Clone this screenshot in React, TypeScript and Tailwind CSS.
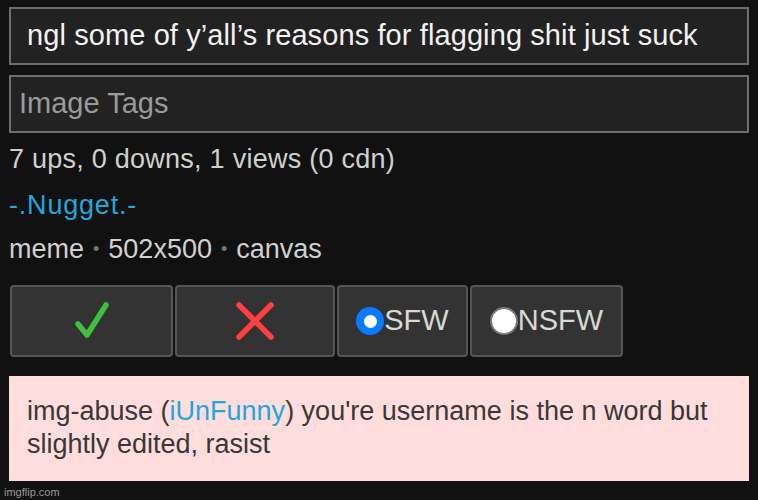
export default function App() {
    return (
        <div className="w-[758px] h-[500px] bg-[#111111] overflow-hidden flex flex-col font-['Liberation_Sans',Arial,sans-serif]">
            <div className="px-[9px] pt-[7px] flex flex-col gap-[10px]">
                <div className="h-[58px] border-2 border-[#6f6f6f] bg-[#222222] flex items-center pl-[16px]">
                    <span className="text-[29px] text-[#f2f2f2] whitespace-nowrap tracking-[0.1px]">ngl some of y’all’s reasons for flagging shit just suck</span>
                </div>
                <div className="h-[58px] border-2 border-[#6f6f6f] bg-[#222222] flex items-center pl-[8px]">
                    <span className="text-[29px] text-[#9a9a9a]">Image Tags</span>
                </div>
            </div>
            <div className="px-[9px] mt-[3px] flex flex-col text-[27px] text-[#d0d0d0]">
                <div className="h-[46px] flex items-center tracking-[0.25px]">7 ups, 0 downs, 1 views (0 cdn)</div>
                <div className="h-[46px] flex items-center text-[#1fa8dc] text-[27px] tracking-[0.8px]">-.Nugget.-</div>
                <div className="h-[42px] flex items-center">
                    meme<span className="text-[#777] mx-[9px] text-[18px]">•</span>502x500<span className="text-[#777] mx-[9px] text-[18px]">•</span>canvas
                </div>
            </div>
            <div className="flex gap-[2px] px-[10px] mt-[15px]">
                <button className="w-[163px] h-[72px] rounded-[4px] border-2 border-[#555] bg-[#333333] flex items-center justify-center">
                    <svg width="44" height="48" viewBox="0 0 44 48">
                        <path d="M8 27 L17 38 L36 8" fill="none" stroke="#3fbf3f" strokeWidth="5.5" strokeLinecap="round" strokeLinejoin="round" />
                    </svg>
                </button>
                <button className="w-[160px] h-[72px] rounded-[4px] border-2 border-[#555] bg-[#333333] flex items-center justify-center">
                    <svg width="44" height="44" viewBox="0 0 44 44">
                        <path d="M6 6 L38 38 M38 6 L6 38" fill="none" stroke="#ff4040" strokeWidth="5.5" strokeLinecap="round" />
                    </svg>
                </button>
                <button className="w-[131px] h-[72px] rounded-[4px] border-2 border-[#555] bg-[#333333] flex items-center justify-center text-[29px] text-[#d8d8d8]">
                    <span className="w-[28px] h-[28px] rounded-full bg-[#0a7aff] flex items-center justify-center">
                        <span className="w-[13px] h-[13px] rounded-full bg-white" />
                    </span>
                    SFW
                </button>
                <button className="w-[153px] h-[72px] rounded-[4px] border-2 border-[#555] bg-[#333333] flex items-center justify-center text-[29px] text-[#d8d8d8]">
                    <span className="w-[28px] h-[28px] rounded-full bg-white border-2 border-[#777]" />
                    NSFW
                </button>
            </div>
            <div className="mx-[9px] mt-[19px] h-[106px] bg-[#ffdddd] px-[18px] pt-[19px] text-[27px] leading-[33px] text-[#383838]">
                <p>img-abuse (<span className="text-[#1fa8dc]">iUnFunny</span>) you're username is the n word but</p>
                <p>slightly edited, rasist</p>
            </div>
            <div className="px-[4px] mt-[3px] text-[11px] text-[#9a9a9a]">imgflip.com</div>
        </div>
    )
}
